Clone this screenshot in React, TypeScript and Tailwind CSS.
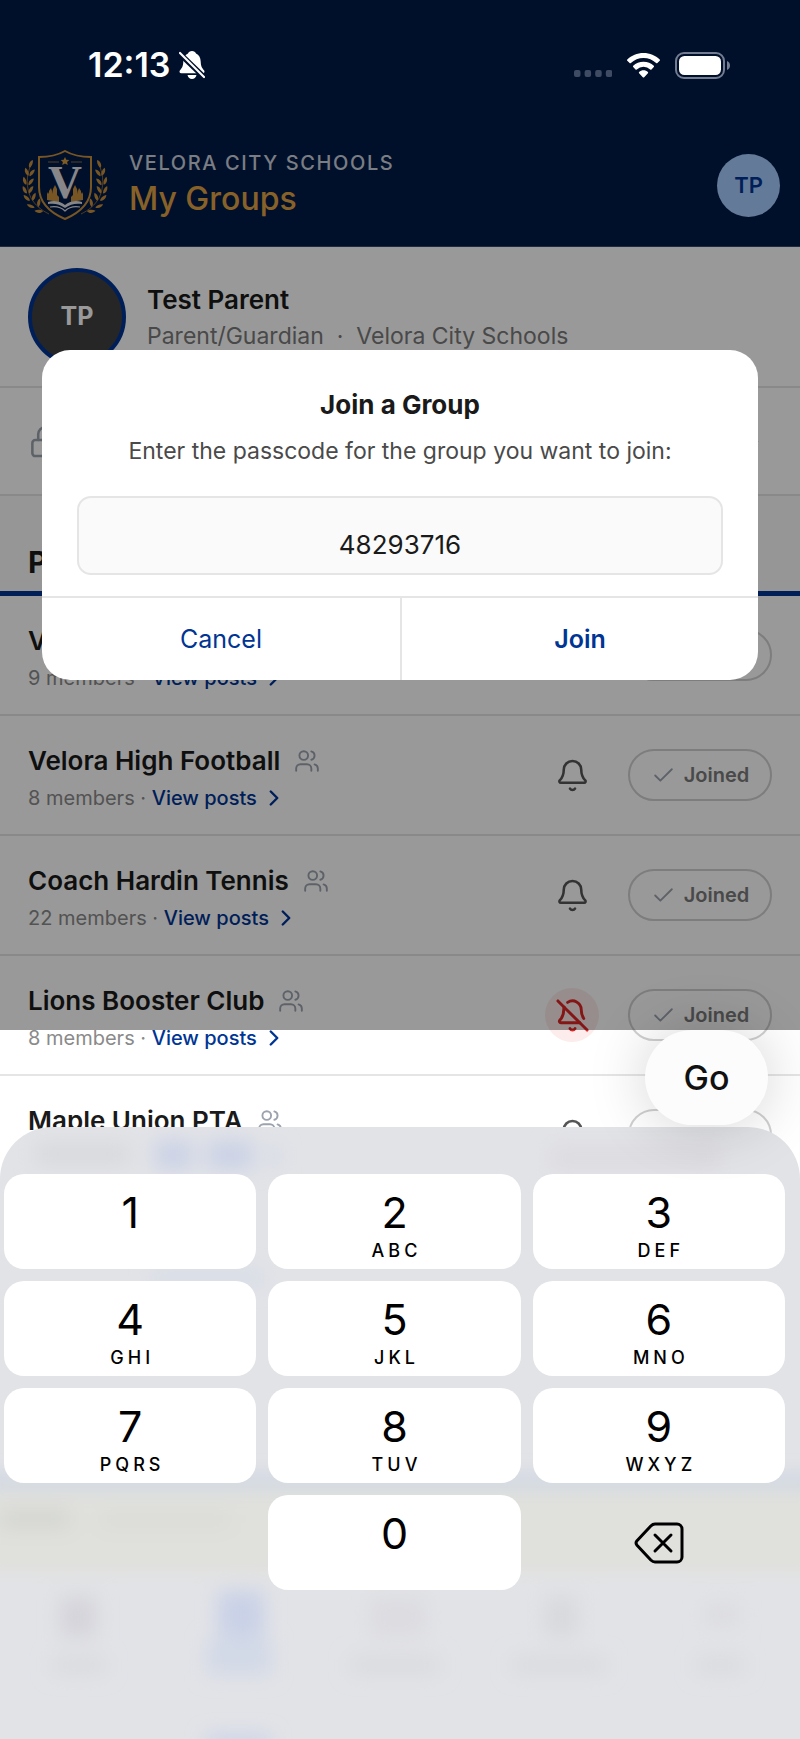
import { useState } from 'react';
import { Bell, BellOff, Check, ChevronRight, Lock, Users } from 'lucide-react';

interface Group {
  id: number;
  name: string;
  members: number;
  muted?: boolean;
}

interface KeyDef {
  digit: string;
  letters?: string;
}

const GROUPS: Group[] = [
  { id: 1, name: 'Velora', members: 9 },
  { id: 2, name: 'Velora High Football', members: 8 },
  { id: 3, name: 'Coach Hardin Tennis', members: 22 },
  { id: 4, name: 'Lions Booster Club', members: 8, muted: true },
  { id: 5, name: 'Maple Union PTA', members: 14 },
];

const KEYS: KeyDef[] = [
  { digit: '1' },
  { digit: '2', letters: 'ABC' },
  { digit: '3', letters: 'DEF' },
  { digit: '4', letters: 'GHI' },
  { digit: '5', letters: 'JKL' },
  { digit: '6', letters: 'MNO' },
  { digit: '7', letters: 'PQRS' },
  { digit: '8', letters: 'TUV' },
  { digit: '9', letters: 'WXYZ' },
];

// One laurel branch, drawn for the left side and mirrored for the right
function Laurel() {
  const leaves = [
    [9, 15, -66], [5, 23, -112], [10, 24, -52], [3, 32, -108], [9, 33, -52],
    [3, 41, -118], [9, 41, -60], [5, 49, -138], [12, 48, -70],
    [9, 57, -158], [17, 54, -80], [17, 62, -178],
  ];
  return (
    <g>
      <path d="M9 16C4 26 4 39 9 49c4 7 10 12 18 16" fill="none" stroke="#a97632" strokeWidth="0.8" />
      {leaves.map(([x, y, r]) => (
        <path key={`${x}-${y}`} d="M-4 0C-2-2.500 2-2.500 4.500 0 2 1.700-2 1.700-4 0z" fill="#c98f3c" transform={`translate(${x} ${y}) rotate(${r})`} />
      ))}
    </g>
  );
}

function SchoolCrest() {
  return (
    <svg viewBox="0 0 86 72" className="h-[72px] w-[86px] shrink-0" role="img" aria-label="School crest">
      <Laurel />
      <g transform="translate(86 0) scale(-1 1)"><Laurel /></g>
      <path d="M43 2c7 4 16 6 26 6v30c0 16-12 26-26 32C29 64 17 54 17 38V8C27 8 36 6 43 2z" fill="#001a47" stroke="#c98f3c" strokeWidth="2" />
      <path d="M43 8l1.300 2.800 3 .3-2.200 2 .7 3-2.800-1.600-2.800 1.600.7-3-2.200-2 3-.3z" fill="#d69a3f" />
      <path d="M26 13h11M49 13h11" stroke="#8b6a3c" strokeWidth="1" />
      <path d="M25 51v-6l1-2 1 2v-3l2-3 1 3v3l1-5 2-4 2 4v6l2 2v5zM61 51v-6l-1-2-1 2v-3l-2-3-1 3v3l-1-5-2-4-2 4v6l-2 2v5z" fill="#c98f3c" />
      <text x="43" y="49" textAnchor="middle" fontSize="47" fontWeight="700" fontFamily="'Liberation Serif', serif" fill="#e1e1e6">V</text>
      <path d="M26 53c6-2 12-1 17 3 5-4 11-5 17-3v2c-6-1-12 0-17 4-5-4-11-5-17-4z" fill="#dedfe6" />
      <path d="M28 58c6-1 11 0 15 4 4-4 9-5 15-4" fill="none" stroke="#dedfe6" strokeWidth="1.200" />
    </svg>
  );
}

function StatusBar() {
  return (
    <div className="absolute inset-x-0 top-0 z-20 flex h-[130px] items-center justify-between pr-[70px] pl-[88px] text-white">
      <div className="flex items-center gap-[9px]">
        <span className="text-[34px] leading-10 font-semibold">12:13</span>
        <svg viewBox="0 0 26 28" className="h-7 w-[26px]" aria-label="Silent mode">
          <path d="M13 0c2 0 3.500 1 4 2.500 3 1.200 4.500 4 4.700 8 .2 5 1.300 6.500 3.300 8.700 1 1.300.5 3-1.300 3H2.300C.5 22.200 0 20.500 1 19.200c2-2.200 3.100-3.700 3.300-8.700.2-4 1.700-6.800 4.700-8C9.500 1 11 0 13 0zM8.500 24h9c-.6 2.500-2.300 4-4.500 4s-3.900-1.500-4.500-4z" fill="#fff" />
          <path d="M0 2l25 24" stroke="#000f2b" strokeWidth="5.500" />
          <path d="M1 2l24 24" stroke="#fff" strokeWidth="2.200" strokeLinecap="round" />
        </svg>
      </div>
      <div className="flex items-center">
        <svg viewBox="0 0 38 26" className="mr-[15px] h-[26px] w-[38px]" aria-label="No signal">
          {[0, 10.600, 21.200, 31.800].map((x) => (
            <rect key={x} x={x} y="18" width="6.500" height="7" rx="2" fill="#3f4b62" />
          ))}
        </svg>
        <svg viewBox="0 0 33 25" className="mr-[15px] h-[25px] w-[33px]" aria-label="Wi-Fi">
          <path d="M16.500 0C22.800 0 28.500 2.500 32.700 6.500c.4.400.4.900 0 1.300L30.400 10c-.4.400-.9.400-1.300 0-3.300-3.100-7.700-5-12.600-5S7.200 6.900 3.900 10c-.4.400-.9.400-1.300 0L.3 7.800c-.4-.4-.4-.9 0-1.300C4.500 2.500 10.200 0 16.500 0z" fill="#fff" />
          <path d="M16.500 8.800c4 0 7.600 1.500 10.300 4 .4.400.4.900 0 1.300l-2.300 2.300c-.4.400-.9.400-1.300 0a9.700 9.700 0 0 0-13.400 0c-.4.400-.9.400-1.300 0l-2.300-2.300c-.4-.4-.4-.9 0-1.300 2.700-2.500 6.300-4 10.300-4z" fill="#fff" />
          <path d="M16.500 17.300c1.700 0 3.200.6 4.400 1.600.4.400.4.900 0 1.300l-3.700 4c-.4.400-1 .4-1.400 0l-3.700-4c-.4-.4-.4-.9 0-1.300 1.200-1 2.700-1.600 4.400-1.600z" fill="#fff" />
        </svg>
        <svg viewBox="0 0 55 27" className="h-[27px] w-[55px]" aria-label="Battery full">
          <rect x="1" y="1" width="48" height="25" rx="8" fill="none" stroke="#737c90" strokeWidth="2" />
          <rect x="4" y="4" width="42" height="19" rx="5.500" fill="#fff" />
          <path d="M52 9c2 .8 3 2.500 3 4.500s-1 3.700-3 4.500z" fill="#737c90" />
        </svg>
      </div>
    </div>
  );
}

function GroupRow({ group }: { group: Group }) {
  return (
    <li className="flex h-[120px] items-center border-b-2 border-[#e5e5e5] px-7">
      <div className="min-w-0 flex-1 pt-[5px]">
        <div className="flex items-center gap-[14px]">
          <h3 className="text-[26px] leading-8 font-semibold text-[#1a1a1a]">{group.name}</h3>
          <Users size={26} strokeWidth={1.75} className="text-[#9ca3af]" />
        </div>
        <p className="mt-2 flex items-center text-[20px] leading-6 text-[#8a8a8a]">
          {group.members} members&nbsp;·&nbsp;
          <a href="#posts" className="flex items-center gap-1 font-medium text-[#003594]">
            View posts
            <ChevronRight size={26} strokeWidth={2.25} />
          </a>
        </p>
      </div>
      <button
        type="button"
        aria-label={group.muted ? 'Unmute notifications' : 'Mute notifications'}
        className={`mr-[29px] flex size-[54px] items-center justify-center rounded-full ${group.muted ? 'bg-[#fdecec] text-[#dc2626]' : 'text-[#555555]'}`}
      >
        {group.muted ? <BellOff size={35} strokeWidth={2} /> : <Bell size={35} strokeWidth={1.75} />}
      </button>
      <button
        type="button"
        className="flex h-[52px] w-36 items-center justify-center gap-2 rounded-full border-2 border-[#d0d0d0] text-[20px] font-semibold text-[#7a7a7a]"
      >
        <Check size={25} strokeWidth={1.75} className="text-[#9ca3af]" />
        Joined
      </button>
    </li>
  );
}

function GroupsPage() {
  return (
    <div>
      <header className="border-b border-[#33486c] bg-[#001a47] pt-[124px]">
        <div className="flex h-[122px] items-center pr-5 pl-[22px]">
          <SchoolCrest />
          <div className="ml-[21px] flex-1">
            <p className="text-[20px] leading-6 font-medium tracking-[0.08em] text-[#ccd1da] uppercase">Velora City Schools</p>
            <h1 className="mt-1 text-[32px] leading-10 font-medium text-[#e0a345]">My Groups</h1>
          </div>
          <button type="button" className="size-[63px] rounded-full bg-[#a6cbff] text-[22px] font-semibold text-[#003594]">TP</button>
        </div>
      </header>

      <section className="flex h-[141px] items-start border-b-2 border-[#e5e5e5] pt-[21px] pl-7">
        <div className="flex size-[98px] shrink-0 items-center justify-center rounded-full border-4 border-[#003594] bg-[#404040] text-[25px] font-bold text-white">
          TP
        </div>
        <div className="ml-[21px] pt-4">
          <h2 className="text-[26px] leading-8 font-semibold text-[#1a1a1a]">Test Parent</h2>
          <p className="mt-1 text-[23px] leading-8 text-[#7a7a7a]">
            Parent/Guardian&nbsp; · &nbsp;Velora City Schools
          </p>
        </div>
      </section>

      <a href="#passcode" aria-label="Join with a passcode" className="flex h-[108px] items-center justify-between border-b-2 border-[#e5e5e5] pr-8 pl-7">
        <Lock size={35} strokeWidth={1.75} className="text-[#9ca3af]" />
        <ChevronRight size={29} className="text-[#9ca3af]" />
      </a>

      <h2 className="border-b-[5px] border-[#003594] bg-[#fafafa] pt-12 pb-[11px] pl-7 text-[30px] leading-9 font-bold text-[#1a1a1a]">
        Public Groups
      </h2>

      <ul>
        {GROUPS.map((g) => <GroupRow key={g.id} group={g} />)}
      </ul>
    </div>
  );
}

interface DialogProps {
  code: string;
  onChange: (v: string) => void;
}

function JoinDialog({ code, onChange }: DialogProps) {
  return (
    <form
      role="dialog"
      aria-labelledby="join-title"
      onSubmit={(e) => e.preventDefault()}
      className="w-full overflow-hidden rounded-[28px] bg-white text-center"
    >
      <div className="px-[35px] pt-[39px] pb-[21px]">
        <h2 id="join-title" className="text-[26px] leading-8 font-bold text-[#1a1a1a]">Join a Group</h2>
        <label htmlFor="passcode" className="mt-[14px] block text-[23px] leading-8 text-[#4a4a4a]">
          Enter the passcode for the group you want to join:
        </label>
        <input
          id="passcode"
          inputMode="numeric"
          value={code}
          onChange={(e) => onChange(e.target.value)}
          className="mt-[29px] block h-[79px] w-full rounded-[14px] border-2 border-[#e5e5e5] bg-[#fafafa] pt-[18px] text-center text-[26px] text-[#1a1a1a] outline-none"
        />
      </div>
      <div className="grid h-[84px] grid-cols-2 border-t-2 border-[#e5e5e5] text-[25px] text-[#003594]">
        <button type="button" className="pt-0.5">Cancel</button>
        <button type="submit" className="border-l-2 border-[#e5e5e5] pt-0.5 font-semibold">Join</button>
      </div>
    </form>
  );
}

// Faint colours of the page showing through the frosted keyboard
function FrostedBackdrop() {
  return (
    <svg viewBox="0 0 800 612" preserveAspectRatio="none" className="absolute inset-0 size-full" aria-hidden="true">
      <defs>
        <filter id="frost" x="-20%" y="-20%" width="140%" height="140%">
          <feGaussianBlur stdDeviation="10" />
        </filter>
      </defs>
      <g filter="url(#frost)">
        <rect x="35" y="16" width="95" height="22" fill="#d8d9dc" />
        <rect x="155" y="14" width="38" height="28" fill="#cad2e6" />
        <rect x="207" y="14" width="46" height="28" fill="#cad2e6" />
        <rect x="270" y="18" width="10" height="22" fill="#d2d8e8" />
        <rect x="550" y="18" width="170" height="26" fill="#dddce1" />
        <rect x="150" y="144" width="115" height="14" fill="#d4dbe6" />
        <rect x="-20" y="350" width="840" height="8" fill="#bdcade" />
        <rect x="-20" y="364" width="840" height="82" fill="#e0e1dc" />
        <rect x="0" y="384" width="70" height="16" fill="#d2d3d0" />
        <rect x="100" y="386" width="130" height="14" fill="#dadbd7" />
        <rect x="60" y="470" width="36" height="40" fill="#d4d4da" />
        <rect x="52" y="530" width="54" height="16" fill="#d9dade" />
        <rect x="218" y="464" width="46" height="46" fill="#c9d1e7" />
        <rect x="206" y="512" width="66" height="36" fill="#d2d9e7" />
        <rect x="370" y="470" width="56" height="40" fill="#dcdce1" />
        <rect x="350" y="530" width="90" height="16" fill="#d9dade" />
        <rect x="544" y="470" width="34" height="40" fill="#d8d9dd" />
        <rect x="512" y="530" width="94" height="16" fill="#d9dade" />
        <rect x="704" y="478" width="36" height="20" fill="#dbdce0" />
        <rect x="696" y="530" width="48" height="16" fill="#d9dade" />
        <rect x="206" y="609" width="64" height="12" fill="#c4cee8" />
      </g>
    </svg>
  );
}

interface KeypadProps {
  onDigit: (d: string) => void;
  onDelete: () => void;
}

function Keypad({ onDigit, onDelete }: KeypadProps) {
  return (
    <div className="relative h-[612px] overflow-hidden rounded-t-[52px] bg-[#e2e3e7] pt-[47px] pr-[15px] pl-1">
      <FrostedBackdrop />
      <div className="relative grid grid-cols-3 gap-3">
        {KEYS.map((k) => (
          <button
            key={k.digit}
            type="button"
            onClick={() => onDigit(k.digit)}
            className="flex h-[95px] flex-col items-center rounded-[20px] bg-white pt-[15px] text-black"
          >
            <span className="text-[43px] leading-[46px]">{k.digit}</span>
            {k.letters && <span className="pl-1 text-[18px] leading-8 font-medium tracking-[4px]">{k.letters}</span>}
          </button>
        ))}
        <button
          type="button"
          onClick={() => onDigit('0')}
          className="col-start-2 flex h-[95px] flex-col items-center rounded-[20px] bg-white pt-[15px] text-black"
        >
          <span className="text-[43px] leading-[46px]">0</span>
        </button>
        <button type="button" aria-label="Delete" onClick={onDelete} className="flex items-center justify-center">
          <svg viewBox="0 0 50 42" className="h-[42px] w-[50px]" fill="none" stroke="#000" strokeWidth="3" strokeLinejoin="round" strokeLinecap="round">
            <path d="M21 2h22a5 5 0 0 1 5 5v28a5 5 0 0 1-5 5H21c-2 0-3-.8-4.200-2L3 23.200c-1.200-1.400-1.200-3 0-4.400L16.800 4C18 2.800 19 2 21 2z" />
            <path d="M21 13l16 16M37 13L21 29" />
          </svg>
        </button>
      </div>
    </div>
  );
}

export default function App() {
  const [code, setCode] = useState('48293716');

  return (
    <div className="relative min-h-screen overflow-hidden bg-white font-[Inter,'Liberation_Sans',sans-serif]">
      <GroupsPage />
      <StatusBar />

      {/* Modal and keyboard layer */}
      <div className="absolute inset-0 z-10 flex flex-col">
        <div className="flex flex-1 items-center bg-black/40 px-[42px]">
          <JoinDialog code={code} onChange={setCode} />
        </div>
        <div className="relative z-10 flex h-[97px] items-start justify-end pr-8">
          <button
            type="button"
            className="h-[95px] w-[123px] rounded-[48px] bg-[#fcfcfc] text-[34px] font-medium text-[#111111] shadow-[0_0_60px_rgba(0,0,0,0.18)]"
          >
            Go
          </button>
        </div>
        <Keypad
          onDigit={(d) => setCode((c) => c + d)}
          onDelete={() => setCode((c) => c.slice(0, -1))}
        />
      </div>
    </div>
  );
}
